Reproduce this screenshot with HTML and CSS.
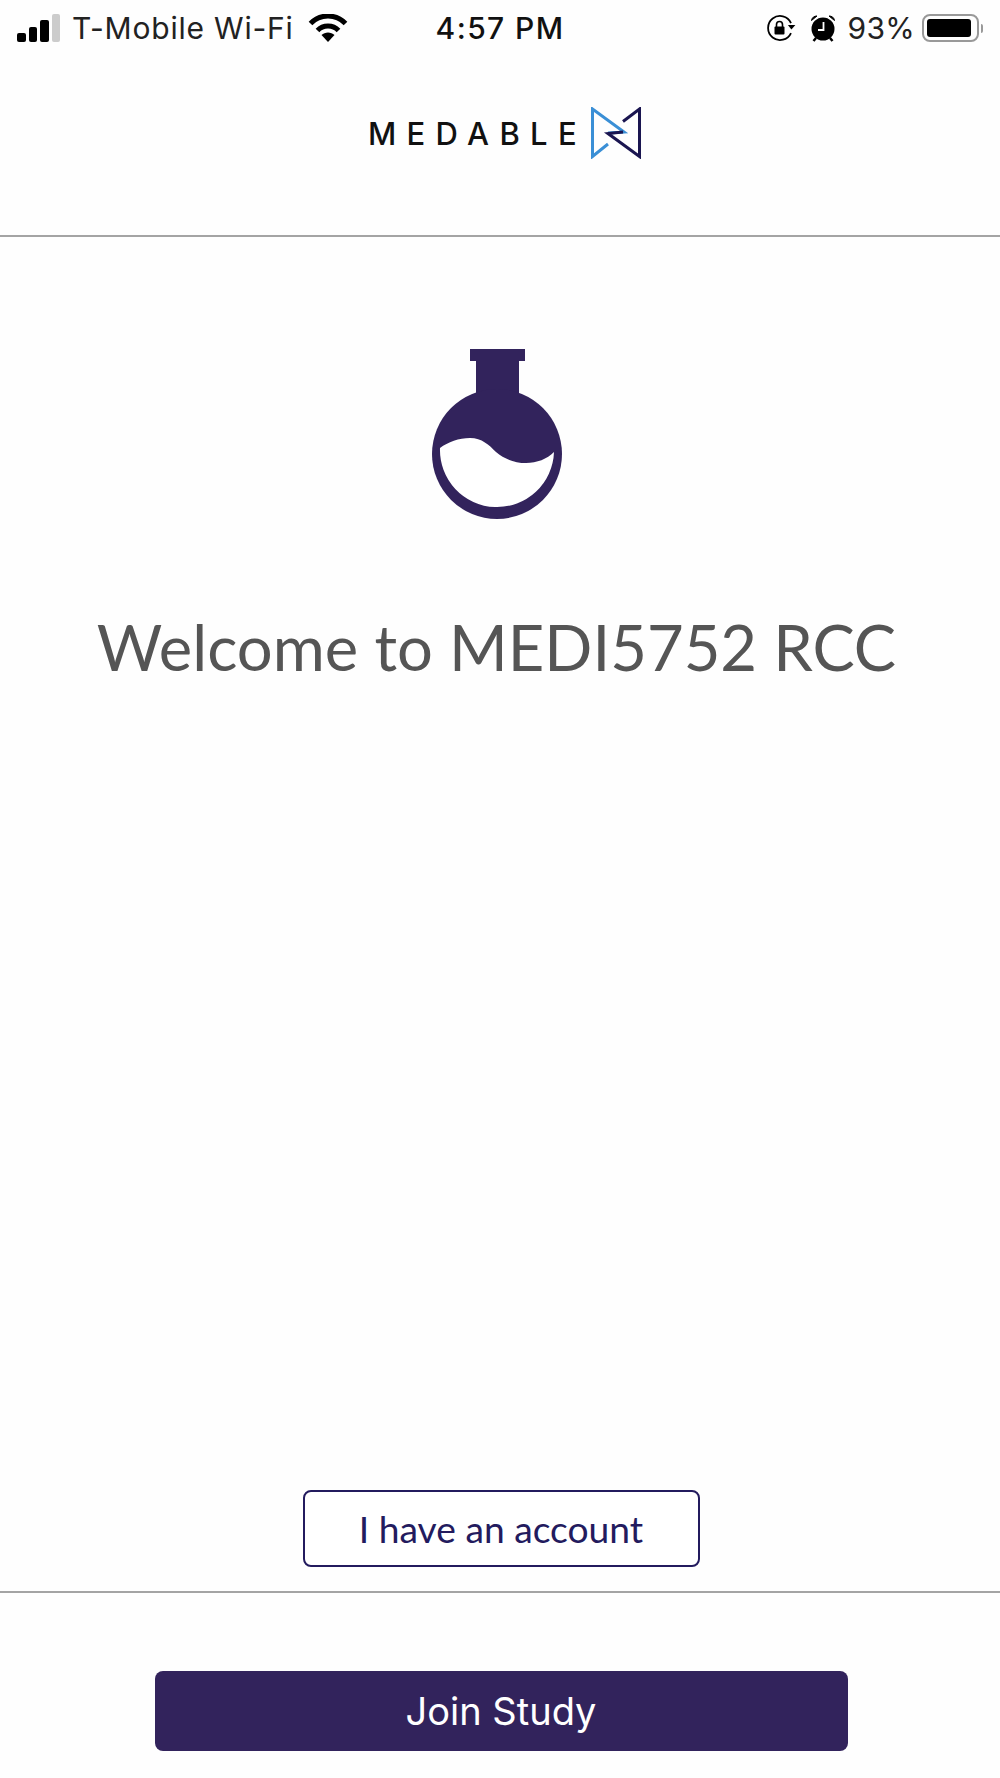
FILE: index.html
```html
<!DOCTYPE html>
<html lang="en">
<head>
  <meta charset="UTF-8">
  <meta name="viewport" content="width=device-width, initial-scale=1.0">
  <title>Medable</title>
  <link rel="stylesheet" href="styles.css">
</head>
<body>
  <div class="screen">
    <!-- iOS status bar -->
    <div class="status-bar">
      <div class="status-left">
        <div class="signal">
          <span class="signal-bar bar-1"></span>
          <span class="signal-bar bar-2"></span>
          <span class="signal-bar bar-3"></span>
          <span class="signal-bar bar-4"></span>
        </div>
        <span class="carrier">T-Mobile Wi-Fi</span>
        <svg class="wifi" viewBox="0 0 40 28">
          <path d="M20 28 L13.5 21 C17 17.5 23 17.5 26.5 21 Z" fill="#000"/>
          <path d="M9.5 16.5 C15 10.5 25 10.5 30.500 16.5" fill="none" stroke="#000" stroke-width="5"/>
          <path d="M2.500 9.500 C12 -0.500 28 -0.500 37.500 9.500" fill="none" stroke="#000" stroke-width="5"/>
        </svg>
      </div>
      <div class="status-time">4:57 PM</div>
      <div class="status-right">
        <svg class="rotation-lock" viewBox="0 0 30 26">
          <path d="M25 18 A12 12 0 1 1 25 8" fill="none" stroke="#000" stroke-width="1.800"/>
          <path d="M22 12 L29.500 12 L26 7.500 Z" fill="#000" transform="rotate(180 25.700 11)"/>
          <rect x="8.500" y="11.500" width="10" height="8" rx="1" fill="#000"/>
          <path d="M10.500 12 V9.500 A3 3 0 0 1 16.500 9.500 V12" fill="none" stroke="#000" stroke-width="1.600"/>
        </svg>
        <svg class="alarm" viewBox="0 0 26 27">
          <circle cx="13" cy="14" r="11.500" fill="#000"/>
          <path d="M13.500 7 V15 H8" fill="none" stroke="#fff" stroke-width="1.800"/>
          <path d="M1.500 5.500 C2 2.500 4 1 7 1 Z M24.500 5.500 C24 2.500 22 1 19 1 Z" fill="#000" stroke="#000" stroke-width="1"/>
          <path d="M6 23 L3.500 26 M20 23 L22.500 26" stroke="#000" stroke-width="2.500"/>
        </svg>
        <span class="battery-pct">93%</span>
        <div class="battery">
          <div class="battery-body"><div class="battery-fill"></div></div>
          <div class="battery-nub"></div>
        </div>
      </div>
    </div>

    <div class="brand-bar">
      <span class="brand-name">MEDABLE</span>
      <svg class="brand-mark" viewBox="0 0 50 52">
        <path d="M17 37 L1.500 49.500 V2 L33 25 L17 26" fill="none" stroke="#3a8fd6" stroke-width="3"/>
        <path d="M32 14.500 L48.500 2 V49.500 L17 26.500 L32 25" fill="none" stroke="#1a1550" stroke-width="3"/>
      </svg>
    </div>

    <div class="welcome">
      <svg class="flask" viewBox="0 0 130 170">
        <path d="M38 0 H93 V12 H87 V46 H44 V12 H38 Z" fill="#32235c"/>
        <circle cx="65" cy="105" r="65" fill="#32235c"/>
        <path d="M8 99 C16 93 27 89 38 89 C50 89 57 96 64 103 C72 110 83 114 94 114 C105 114 115 110 122 103 A57 57 0 1 1 8 99 Z" fill="#fff"/>
      </svg>
      <h1>Welcome to MEDI5752 RCC</h1>
    </div>

    <div class="account-row">
      <button class="btn-outline">I have an account</button>
    </div>
    <div class="join-row">
      <button class="btn-primary">Join Study</button>
    </div>
  </div>
</body>
</html>
```

FILE: styles.css
```css
body {
  margin: 0;
  background-color: #fefefe;
  color: #000;
  font-family: "Lato", sans-serif;
}
.screen {
  width: 1000px;
  height: 1778px;
  display: flex;
  flex-direction: column;
  overflow: hidden;
}
.status-bar {
  height: 56px;
  padding: 0 17px 0 17px;
  display: grid;
  grid-template-columns: 1fr auto 1fr;
  align-items: center;
  font-family: "Inter", sans-serif;
  font-size: 30px;
}
.status-left {
  display: flex;
  align-items: center;
}
.signal {
  display: flex;
  align-items: flex-end;
  gap: 3px;
  height: 28px;
  margin-right: 12px;
}
.signal-bar {
  width: 8.500px;
  background-color: #000;
  border-radius: 2px;
}
.bar-1 { height: 9px; }
.bar-2 { height: 15px; }
.bar-3 { height: 22px; }
.bar-4 { height: 28px; background-color: #ccc; }
.carrier {
  color: #222;
  letter-spacing: 0.8px;
}
.wifi {
  width: 40px;
  height: 28px;
  margin-left: 14px;
}
.status-time {
  font-weight: 500;
  letter-spacing: 1.400px;
  color: #111;
}
.status-right {
  display: flex;
  align-items: center;
  justify-content: flex-end;
}
.rotation-lock {
  width: 30px;
  height: 26px;
  margin-right: 14px;
}
.alarm {
  width: 26px;
  height: 27px;
  margin-right: 12px;
}
.battery-pct {
  color: #222;
  margin-right: 7px;
  letter-spacing: 0.3px;
}
.battery {
  display: flex;
  align-items: center;
}
.battery-body {
  width: 57px;
  height: 28px;
  box-sizing: border-box;
  border: 2px solid #999;
  border-radius: 8px;
  padding: 3px;
}
.battery-fill {
  width: 44px;
  height: 100%;
  background-color: #000;
  border-radius: 3px;
}
.battery-nub {
  width: 2px;
  height: 9px;
  margin-left: 2px;
  background-color: #999;
  border-radius: 0 2px 2px 0;
}
.brand-bar {
  height: 181px;
  box-sizing: border-box;
  border-bottom: 2px solid #a4a4a4;
  padding: 51px 0 0 368px;
  display: flex;
  align-items: flex-start;
}
.brand-name {
  margin-top: 12px;
  width: 223px;
  font-family: "Inter", sans-serif;
  font-size: 31px;
  line-height: 30px;
  font-weight: 500;
  letter-spacing: 10.300px;
  color: #111;
}
.brand-mark {
  width: 50px;
  height: 52px;
}
.welcome {
  flex: 1;
  display: flex;
  flex-direction: column;
  align-items: center;
  padding-top: 112px;
}
.flask {
  width: 130px;
  height: 170px;
  margin-left: -7px;
}
h1 {
  margin: 90px 0 0 -7px;
  font-size: 63.300px;
  line-height: 76px;
  font-weight: 400;
  color: #555;
}
.account-row {
  height: 102px;
  box-sizing: border-box;
  border-bottom: 2px solid #a4a4a4;
  display: flex;
  justify-content: center;
  padding-left: 2px;
}
.btn-outline {
  width: 397px;
  height: 77px;
  margin-top: -1px;
  background-color: #fff;
  border: 2px solid #231b5e;
  border-radius: 8px;
  color: #231b5e;
  font-family: "Lato", sans-serif;
  font-size: 37.200px;
}
.join-row {
  height: 107px;
  padding-top: 78px;
  padding-left: 2px;
  display: flex;
  justify-content: center;
}
.btn-primary {
  width: 693px;
  height: 80px;
  background-color: #32235c;
  border: none;
  border-radius: 8px;
  color: #fff;
  font-family: "Inter", sans-serif;
  font-size: 38px;
}
```
